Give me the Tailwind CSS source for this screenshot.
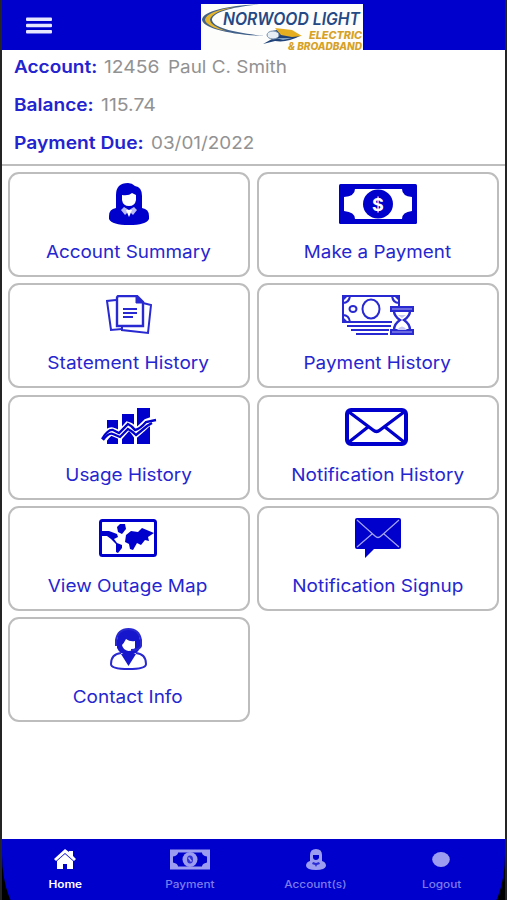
<!DOCTYPE html>
<html lang="en">
<head>
  <meta charset="UTF-8" />
  <meta name="viewport" content="width=device-width, initial-scale=1.0" />
  <title>Norwood Light Electric &amp; Broadband</title>
  <script src="https://cdn.jsdelivr.net/npm/@tailwindcss/browser@4"></script>
</head>
<body class="bg-black font-['Inter',sans-serif]">
  <div class="w-[507px] h-[900px] overflow-hidden bg-[#242424] pl-[2px] pr-[2px]">
    <div class="w-[503px] h-[900px] flex flex-col bg-black">

      <header class="h-[50px] shrink-0 bg-[#0000cc] flex items-start">
        <svg class="ml-6 mt-4 w-[26px] h-[19px]" viewBox="0 0 26 19" fill="#e6e6ff">
          <rect x="0" y="1.500" width="26" height="3.400" rx="1" />
          <rect x="0" y="7.800" width="26" height="3.400" rx="1" />
          <rect x="0" y="14.100" width="26" height="3.400" rx="1" />
        </svg>
        <svg class="ml-[149px] mt-1 w-[162px] h-[46px] overflow-visible" viewBox="0 0 162 46">
          <rect width="162" height="46" fill="#fdfdfb" />
          <path d="M58 0.500C30 1 2 7 1 15.500C1 24 30 31 64 32C36 29 12 24 11 16C11 8 32 3 58 0.500z" fill="#41618a" />
          <path d="M34 3C17 5 5 10 4 15.500C4 20 14 25 25 27C15 23 9 20 9 15.500C10 10 20 6 34 3z" fill="#e5b52c" />
          <path d="M62 40L71 35L66 32Q68 27 76 26L99 32Q86 39 74 37z" fill="#1f4379" />
          <path d="M74 24L91 26L101 32L91 33L80 31z" fill="#e5ae20" />
          <ellipse cx="72" cy="31" rx="6" ry="4" fill="#e7eef4" stroke="#7992ad" />
          <path d="M75 34L91 34L82 36z" fill="#83a4c5" />
          <g font-family="Inter, sans-serif" font-style="italic" font-weight="600">
            <text x="22" y="20.500" font-size="17" textLength="137" lengthAdjust="spacingAndGlyphs" fill="#244984">NORWOOD LIGHT</text>
            <text x="108" y="34.500" font-size="10" font-weight="800" textLength="53" lengthAdjust="spacingAndGlyphs" fill="#d6a126">ELECTRIC</text>
            <text x="87" y="45.500" font-size="10" font-weight="800" textLength="74" lengthAdjust="spacingAndGlyphs" fill="#d6a126">&amp; BROADBAND</text>
          </g>
        </svg>
      </header>

      <section class="h-[116px] shrink-0 bg-white border-b-2 border-[#bdbdbd] pl-3 text-[17.500px] leading-[38px] whitespace-nowrap">
        <div class="-mt-[2px] h-[38px] flex">
          <b class="w-[90px] font-semibold text-[#2323cf]"><span class="inline-block origin-left scale-x-[1.085]">Account:</span></b>
          <span class="w-[64px] text-[#929292]"><span class="inline-block origin-left scale-x-[1.100]">12456</span></span>
          <span class="text-[#929292]"><span class="inline-block origin-left scale-x-[1.080]">Paul C. Smith</span></span>
        </div>
        <div class="h-[38px] flex">
          <b class="w-[87px] font-semibold text-[#2323cf]"><span class="inline-block origin-left scale-x-[1.090]">Balance:</span></b>
          <span class="text-[#929292]"><span class="inline-block origin-left scale-x-[1.110]">115.74</span></span>
        </div>
        <div class="h-[38px] flex">
          <b class="w-[137px] font-semibold text-[#2323cf]"><span class="inline-block origin-left scale-x-[1.100]">Payment Due:</span></b>
          <span class="text-[#929292]"><span class="inline-block origin-left scale-x-[1.080]">03/01/2022</span></span>
        </div>
      </section>

      <main class="flex-1 bg-white pt-[6px] px-[6px] text-[#2626d0] text-[17.500px] leading-[35px] whitespace-nowrap">
        <div class="grid grid-cols-[242px_242px] auto-rows-[105px] gap-x-[7px] gap-y-[6.300px]">
          <div class="border-2 border-[#bdbdbd] rounded-[11px] flex flex-col items-center pr-px">
            <div class="h-[60px] shrink-0 flex items-center">
              <svg class="w-[40px] h-[42px]" viewBox="0 0 40 42">
                <path d="M7 25V12Q7 0 19 0Q23 0 26 3Q33 4 33 13V25Q40 26 40 33V36Q37 42 20 42Q3 42 0 36V33Q0 26 7 25z" fill="#0000cc" />
                <path d="M13 12Q20 13 23 10L27 12V17Q26 23 20 23Q14 23 13 17z" fill="#fff" />
                <path d="M15 24L12 27L16 32L20 28L24 32L28 27L25 24L20 27z" fill="#bcbcf5" />
                <path d="M17 27H23L20 34z" fill="#fff" />
              </svg>
            </div>
            <span class="scale-x-[1.080]">Account Summary</span>
          </div>

          <div class="border-2 border-[#bdbdbd] rounded-[11px] flex flex-col items-center pr-px">
            <div class="h-[60px] shrink-0 flex items-center">
              <svg class="w-[78px] h-[40px]" viewBox="0 0 78 40">
                <rect width="78" height="40" rx="1.500" fill="#0000cc" />
                <path d="M16 5H63Q63 12 73 13V27Q63 28 63 35H16Q16 28 5 27V13Q16 12 16 5z" fill="#fff" />
                <ellipse cx="39" cy="20" rx="15" ry="14.500" fill="#0000cc" />
                <text x="39" y="26.500" text-anchor="middle" font-family="Inter, sans-serif" font-size="18" font-weight="700" fill="#fff">$</text>
              </svg>
            </div>
            <span class="scale-x-[1.075]">Make a Payment</span>
          </div>

          <div class="border-2 border-[#bdbdbd] rounded-[11px] flex flex-col items-center pr-px">
            <div class="h-[60px] shrink-0 flex items-center">
              <svg class="w-[46px] h-[40px]" viewBox="0 0 46 40" fill="none" stroke="#2929d1" stroke-width="2">
                <path d="M10 5L1 6L5 35L16 34" />
                <path d="M37 8L45 10L42 38L16 35V32" />
                <path d="M13 1H31L37 7V31H11V3Q11 1 13 1z" fill="#fff" stroke-width="2.400" />
                <path d="M30 1V8H37z" fill="#2929d1" stroke-width="1" />
                <path d="M17 14H31M17 18H31M17 22H27" />
              </svg>
            </div>
            <span class="scale-x-[1.090]">Statement History</span>
          </div>

          <div class="border-2 border-[#bdbdbd] rounded-[11px] flex flex-col items-center pr-px">
            <div class="h-[60px] shrink-0 flex items-center">
              <svg class="w-[72px] h-[40px]" viewBox="0 0 72 40" fill="none" stroke="#2929d1" stroke-width="2">
                <path d="M50 27H1V1H57V11" />
                <path d="M1 8Q7 8 8 1M1 20Q7 20 8 27M50 1Q51 8 57 8" />
                <path d="M1 1H6L1 6zM1 27H6L1 22zM57 1H52L57 6z" fill="#2929d1" stroke="none" />
                <ellipse cx="11" cy="14" rx="3.500" ry="3" />
                <ellipse cx="29" cy="14" rx="8.500" ry="9.500" />
                <path d="M5 31H49M9 35H47M14 39H46" />
                <path d="M49 12H71V16H49zM49 35H71V39H49z" fill="#6c6ce0" />
                <path d="M52 16Q52 21 58 25Q52 29 52 35M68 16Q68 21 62 25Q68 29 68 35" stroke-width="2.400" />
                <path d="M56 20H64L60 23zM55 35Q60 28 65 35z" fill="#c4c4f5" stroke="none" />
              </svg>
            </div>
            <span class="scale-x-[1.080]">Payment History</span>
          </div>

          <div class="border-2 border-[#bdbdbd] rounded-[11px] flex flex-col items-center pr-px">
            <div class="h-[60px] shrink-0 flex items-center">
              <svg class="w-[56px] h-[37px]" viewBox="0 0 56 37">
                <path d="M6 12H17V36H6zM21 6H33V36H21zM36 0H49V36H36z" fill="#0000cc" />
                <path d="M2 31Q8 22 12 24L19 27L27 18Q31 19 35 25Q41 20 46 15L54 12" fill="none" stroke="#fff" stroke-width="8.500" />
                <path d="M1 31Q7 21 12 22L18 25L27 16Q31 18 34 22Q39 21 45 14L55 12" fill="none" stroke="#0000cc" stroke-width="2.300" />
                <path d="M2 32Q8 24 12 26L19 29L27 21Q31 23 35 27Q40 23 46 18L51 15" fill="none" stroke="#0000cc" stroke-width="2.300" />
              </svg>
            </div>
            <span class="scale-x-[1.080]">Usage History</span>
          </div>

          <div class="border-2 border-[#bdbdbd] rounded-[11px] flex flex-col items-center pr-[3px]">
            <div class="h-[60px] shrink-0 flex items-center">
              <svg class="w-[63px] h-[38px]" viewBox="0 0 63 38" fill="none" stroke="#0000cc">
                <rect x="2" y="2" width="59" height="34" rx="4" stroke-width="4" />
                <path d="M4 4L28 22Q31.500 25 35 22L59 4M4 34L23 19M59 34L40 19" stroke-width="3.300" />
              </svg>
            </div>
            <span class="relative left-px scale-x-[1.085]">Notification History</span>
          </div>

          <div class="border-2 border-[#bdbdbd] rounded-[11px] flex flex-col items-center pr-[2px]">
            <div class="h-[60px] shrink-0 flex items-center">
              <svg class="w-[58px] h-[38px]" viewBox="0 0 58 38">
                <rect x="1.500" y="1.500" width="55" height="35" rx="2" fill="#fff" stroke="#0000cc" stroke-width="3" />
                <path d="M3 12L10 12L18 15L19 18L15 20L18 24L23 26L23 29L19 34L17 33L17 25L12 20L8 17L3 17z" fill="#0000cc" />
                <path d="M18 8L21 5L26 5L27 10L23 15L19 13z" fill="#0000cc" />
                <path d="M27 16L32 12L39 13L43 9L55 14L49 18L50 22L46 21L42 26L38 24L34 31L31 30L30 25L26 23z" fill="#0000cc" />
              </svg>
            </div>
            <span class="scale-x-[1.085]">View Outage Map</span>
          </div>

          <div class="border-2 border-[#bdbdbd] rounded-[11px] flex flex-col items-center pr-px">
            <div class="h-[60px] shrink-0 flex items-center">
              <svg class="w-[46px] h-[40px]" viewBox="0 0 46 40">
                <path d="M2 0H44Q46 0 46 2V29Q46 31 44 31H19L10 40V31H2Q0 31 0 29V2Q0 0 2 0z" fill="#0000cc" />
                <path d="M2 2L20 18Q23 21 26 18L44 2M2 29L17 16M44 29L29 16" fill="none" stroke="#a3a3f2" stroke-width="1.200" />
              </svg>
            </div>
            <span class="scale-x-[1.085]">Notification Signup</span>
          </div>

          <div class="border-2 border-[#bdbdbd] rounded-[11px] flex flex-col items-center pr-[2px]">
            <div class="h-[60px] shrink-0 flex items-center">
              <svg class="w-[37px] h-[42px]" viewBox="0 0 37 42">
                <path d="M11 25Q1 26 1 36Q1 41 18.500 41Q36 41 36 36Q36 26 26 25" fill="#fff" stroke="#2929d1" stroke-width="2" />
                <path d="M7 20V12Q8 1 18.500 1Q29 1 30 12V20Q27 27 18.500 27Q10 27 7 20z" fill="#1616cc" />
                <path d="M12 17Q14 15 16 11Q20 14 25 13V20Q23 23 18.500 23Q13 22 12 17z" fill="#fff" />
                <path d="M6 18V12Q8 1 18.500 1Q29 1 31 12V18Q30 22 21 22" fill="none" stroke="#2929d1" stroke-width="2" />
                <path d="M11 26H26L18.500 38z" fill="#1616cc" />
              </svg>
            </div>
            <span class="scale-x-[1.085]">Contact Info</span>
          </div>
        </div>
      </main>

      <nav class="h-[61px] shrink-0 overflow-hidden bg-black">
        <div class="h-[75px] bg-[#0000cc] [border-bottom-left-radius:24px_60px] [border-bottom-right-radius:24px_60px] grid grid-cols-4 pr-px text-[10px] leading-[14px] font-medium text-[#7c7ceb]">
          <div class="flex flex-col items-center pt-[10px] text-white font-semibold">
            <svg class="w-[24px] h-[22px]" viewBox="0 0 24 22">
              <path d="M1 10L12 0L16 3V2H20V7L23 10L21 12L12 4L3 12z" fill="#fff" />
              <path d="M4 12L12 5L20 12V20H14V15H10V20H4z" fill="#fff" />
            </svg>
            <span class="mt-[6px] scale-x-[1.180]">Home</span>
          </div>
          <div class="flex flex-col items-center pt-[10px]">
            <svg class="w-[40px] h-[22px]" viewBox="0 0 40 22">
              <rect y="0.500" width="40" height="20" fill="#9c9cf0" />
              <path d="M8 3.500H32Q32 6.500 37 7.500V13.500Q32 14.500 32 17.500H8Q8 14.500 3 13.500V7.500Q8 6.500 8 3.500z" fill="#0000cc" />
              <ellipse cx="20" cy="10.500" rx="7.500" ry="7.500" fill="#9c9cf0" />
              <ellipse cx="20" cy="10.500" rx="3" ry="4" fill="#3030d5" />
              <path d="M18.500 8.500L21.500 12.500" stroke="#9c9cf0" stroke-width="1.500" />
            </svg>
            <span class="mt-[6px] scale-x-[1.180]">Payment</span>
          </div>
          <div class="flex flex-col items-center pt-[10px]">
            <svg class="w-[20px] h-[22px]" viewBox="0 0 20 22">
              <path d="M4 12V6Q4 0 10 0Q16 0 16 6V12Q20 13 20 17Q19 21 10 21Q1 21 0 17Q0 13 4 12z" fill="#9c9cf0" />
              <path d="M7 6H13V9Q12 11 10 11Q7 11 7 8z" fill="#0000cc" />
              <path d="M7 13L10 14L13 13L14 15L11 16L10 18L9 16L6 15z" fill="#2d2dd5" />
            </svg>
            <span class="mt-[6px] scale-x-[1.180]">Account(s)</span>
          </div>
          <div class="flex flex-col items-center pt-[10px]">
            <svg class="w-[18px] h-[22px]" viewBox="0 0 18 22">
              <ellipse cx="9" cy="10.500" rx="8.800" ry="7.500" fill="#9c9cf0" />
            </svg>
            <span class="mt-[6px] scale-x-[1.180]">Logout</span>
          </div>
        </div>
      </nav>
    </div>
  </div>
</body>
</html>
